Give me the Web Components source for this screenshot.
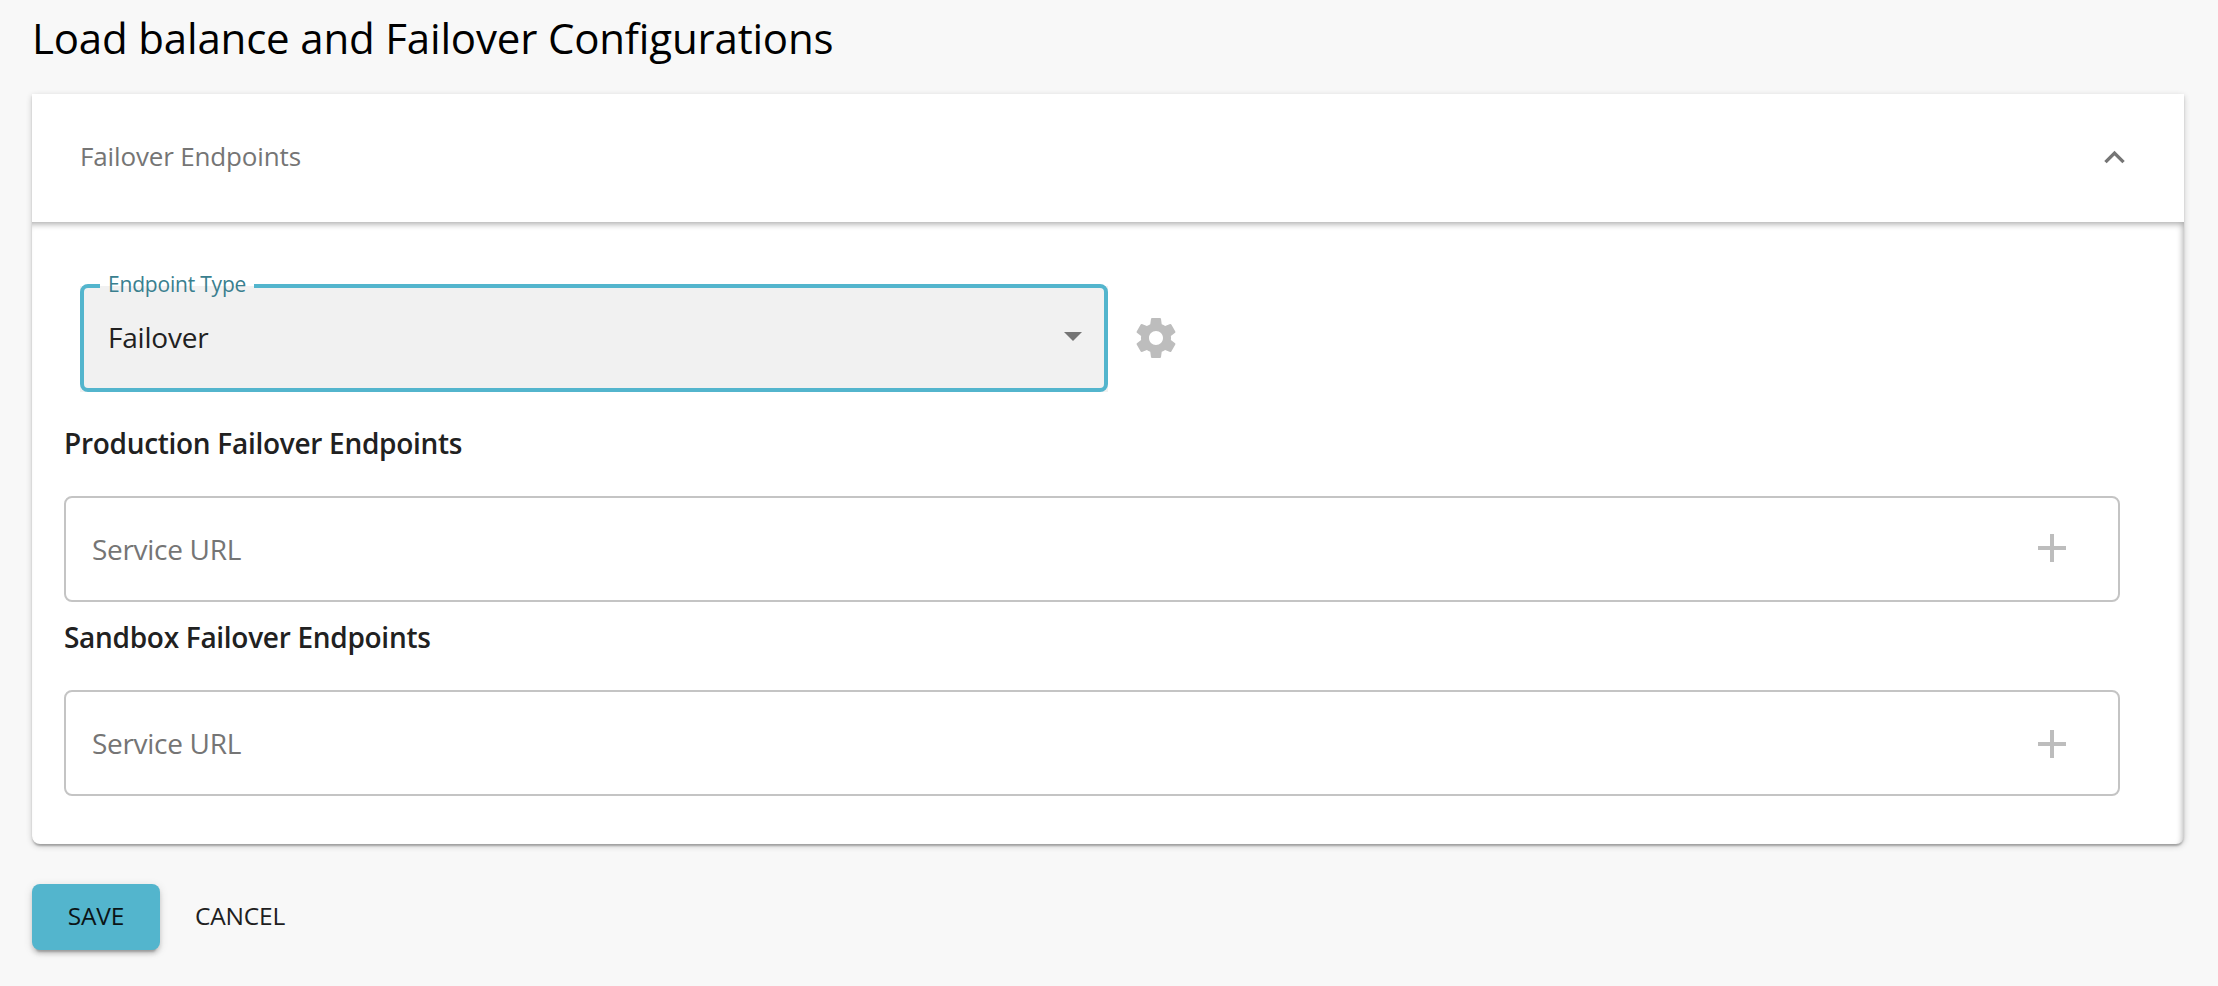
<!DOCTYPE html>
<html lang="en">
<head>
<meta charset="utf-8">
<title>Load balance and Failover Configurations</title>
<style>
html, body { margin: 0; }
body { background: #f8f8f8; font-family: "Open Sans", sans-serif; color: #202020; }
</style>
</head>
<body>
<endpoint-dialog heading="Load balance and Failover Configurations">
  <expansion-panel heading="Failover Endpoints">
    <outlined-select label="Endpoint Type" value="Failover"></outlined-select>
    <endpoint-group heading="Production Failover Endpoints"></endpoint-group>
    <endpoint-group class="last" heading="Sandbox Failover Endpoints"></endpoint-group>
  </expansion-panel>
  <action-button slot="actions" variant="primary">SAVE</action-button>
  <action-button slot="actions">CANCEL</action-button>
</endpoint-dialog>
<script>
const component = (name, render) => customElements.define(name, class extends HTMLElement {
  connectedCallback() {
    if (this.shadowRoot) return;
    this.attachShadow({ mode: 'open' }).innerHTML = render(this);
  }
});

component('endpoint-dialog', el => `
<style>
:host { display: block; box-sizing: border-box; height: 986px; padding: 0 34px 0 32px; overflow: hidden; }
h1 { margin: 0; height: 94px; box-sizing: border-box; padding-top: 10px; font-size: 42px; line-height: 56px; font-weight: 400; letter-spacing: -.17px; color: #000; white-space: nowrap; }
footer { display: flex; margin-top: 40px; }
</style>
<h1>${el.getAttribute('heading')}</h1>
<slot></slot>
<footer><slot name="actions"></slot></footer>`);

component('expansion-panel', el => `
<style>
:host { display: block; box-sizing: border-box; height: 750px; background: #fff; border-radius: 0 0 8px 8px; color: #212121;
  box-shadow: 0 2px 6px rgba(0,0,0,.2), 0 2px 2px rgba(0,0,0,.14), 0 4px 2px -2px rgba(0,0,0,.12); }
header { display: flex; justify-content: space-between; align-items: center; box-sizing: border-box; height: 128px; padding: 0 49px 0 48px; font-size: 26px; line-height: 36px; letter-spacing: -.15px; color: #757575; }
header span { margin-top: -4px; }
svg { display: block; width: 41px; height: 41px; margin-top: -1px; fill: #757575; }
section { box-sizing: border-box; height: 622px; padding: 62px 64px 0 32px; border-radius: 0 0 8px 8px; box-shadow: inset -3px 4px 6px -2px rgba(0,0,0,.34); }
</style>
<header><span>${el.getAttribute('heading')}</span>
<svg viewBox="0 0 24 24"><path d="M12 8l-6 6 1.41 1.41L12 10.83l4.59 4.58L18 14z"/></svg></header>
<section><slot></slot></section>`);

component('outlined-select', el => `
<style>
:host { display: flex; align-items: center; padding-left: 16px; }
.field { position: relative; width: 1028px; height: 108px; box-sizing: border-box; padding: 0 23px 0 28px; display: flex; align-items: center; justify-content: space-between;
  font-size: 28px; line-height: 38px; letter-spacing: -.2px; background: linear-gradient(#f1f1f1, #f1f1f1) 0 2px no-repeat; }
fieldset { position: absolute; inset: 0; margin: 0; padding: 0; border: 4px solid #53b5cd; border-radius: 8px; clip-path: polygon(0 0, 20px 0, 20px 8px, 174px 8px, 174px 0, 100% 0, 100% 100%, 0 100%); }
label { position: absolute; left: 28px; top: -15px; font-size: 21px; line-height: 30px; color: #3a7f8f; white-space: nowrap; }
.arrow { width: 18px; height: 9px; fill: #757575; margin: -4px 3px 0 0; }
.gear { width: 48px; height: 48px; margin-left: 24px; fill: #bdbdbd; }
.value { margin-top: -2px; }
</style>
<div class="field"><fieldset></fieldset><label>${el.getAttribute('label')}</label><span class="value">${el.getAttribute('value')}</span>
<svg class="arrow" viewBox="0 0 10 5"><path d="M0 0l5 5 5-5z"/></svg></div>
<svg class="gear" viewBox="0 0 24 24"><path d="M19.43 12.98c.04-.32.07-.64.07-.98s-.03-.66-.07-.98l2.11-1.65c.19-.15.24-.42.12-.64l-2-3.46c-.12-.22-.39-.3-.61-.22l-2.49 1c-.52-.4-1.08-.73-1.69-.98l-.38-2.65C14.46 2.18 14.25 2 14 2h-4c-.25 0-.46.18-.49.42l-.38 2.65c-.61.25-1.17.59-1.69.98l-2.49-1c-.23-.09-.49 0-.61.22l-2 3.46c-.13.22-.07.49.12.64l2.11 1.65c-.04.32-.07.65-.07.98s.03.66.07.98l-2.11 1.65c-.19.15-.24.42-.12.64l2 3.46c.12.22.39.3.61.22l2.49-1c.52.4 1.08.73 1.69.98l.38 2.65c.03.24.24.42.49.42h4c.25 0 .46-.18.49-.42l.38-2.65c.61-.25 1.17-.59 1.69-.98l2.49 1c.23.09.49 0 .61-.22l2-3.46c.12-.22.07-.49-.12-.64l-2.11-1.65zM12 15.5c-1.93 0-3.5-1.57-3.5-3.5s1.57-3.5 3.5-3.5 3.5 1.57 3.5 3.5-1.57 3.5-3.5 3.5z"/></svg>`);

component('endpoint-group', el => `
<style>
:host { display: block; padding-top: 32px; }
:host(.last) { padding-top: 16px; --icon-shift: 2px; }
h2 { margin: 0; font-size: 28px; line-height: 39px; font-weight: 600; letter-spacing: -.29px; height: 72px; white-space: nowrap; }
.input { display: flex; justify-content: space-between; align-items: center; box-sizing: border-box; width: 2056px; height: 106px; border: 2px solid #c4c4c4; border-radius: 8px; padding: 0 52px 0 26px; font-size: 28px; line-height: 38px; letter-spacing: -.3px; color: #757575; }
svg { width: 28px; height: 28px; fill: #bdbdbd; margin-top: calc(-2px + var(--icon-shift, 0px) * 2); }
</style>
<h2>${el.getAttribute('heading')}</h2>
<div class="input"><span>Service URL</span><svg viewBox="0 0 14 14"><path d="M14 8H8v6H6V8H0V6h6V0h2v6h6z"/></svg></div>`);

component('action-button', el => `
<style>
:host { display: flex; align-items: center; justify-content: center; box-sizing: border-box; width: 128px; height: 66px; border-radius: 8px; font-size: 24.5px; line-height: 34px; letter-spacing: -.2px; }
:host([variant="primary"]) { background: #53b5cd; color: #0b1416; margin-right: 16px; box-shadow: 0 6px 2px -4px rgba(0,0,0,.2), 0 4px 4px rgba(0,0,0,.14), 0 2px 10px rgba(0,0,0,.12); }
span { margin-top: -2px; }
</style><span><slot></slot></span>`);
</script>
</body>
</html>
